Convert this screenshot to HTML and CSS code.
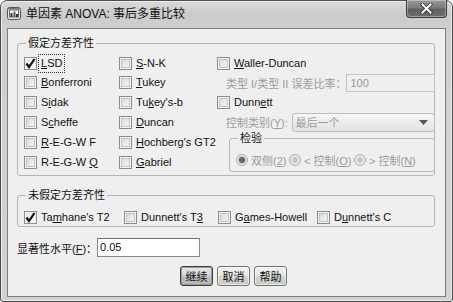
FILE: index.html
```html
<!DOCTYPE html>
<html>
<head>
<meta charset="utf-8">
<title>单因素 ANOVA: 事后多重比较</title>
<link rel="stylesheet" href="styles.css">
</head>
<body>
<div class="window">
  <div class="titlebar">
    <svg class="appicon" width="15" height="15" viewBox="0 0 15 15">
      <rect x="0.5" y="1.5" width="13" height="12" rx="2" fill="#e6e6e6" stroke="#555"/>
      <rect x="2.5" y="4" width="9" height="7" fill="#fff" stroke="#666"/>
      <rect x="3.5" y="7" width="2" height="4" fill="#333"/>
      <rect x="6.5" y="5.5" width="2" height="5.5" fill="#555"/>
      <rect x="9" y="8" width="2" height="3" fill="#333"/>
      <rect x="1" y="2" width="12" height="1.5" fill="#777"/>
    </svg>
    <span class="title">单因素 ANOVA: 事后多重比较</span>
    <div class="close">
      <svg width="13" height="11" viewBox="0 0 13 11">
        <path d="M2.5 1.5 L10.5 9.5 M10.5 1.5 L2.5 9.5" stroke="#2e2e2e" stroke-width="3.6" stroke-linecap="square"/>
        <path d="M2.5 1.5 L10.5 9.5 M10.5 1.5 L2.5 9.5" stroke="#fff" stroke-width="2" stroke-linecap="square"/>
      </svg>
    </div>
  </div>
  <div class="client">
    <fieldset class="group g1">
      <legend>假定方差齐性</legend>
      <div class="grid1">
        <label class="cb"><span class="box checked"><svg width="11" height="11" viewBox="0 0 11 11"><path d="M1.5 5.5 L4 9 L9.5 1" fill="none" stroke="#111" stroke-width="2.2"/></svg></span><span class="lbl focus"><u>L</u>SD</span></label>
        <label class="cb"><span class="box"></span><span class="lbl"><u>S</u>-N-K</span></label>
        <label class="cb"><span class="box"></span><span class="lbl"><u>W</u>aller-Duncan</span></label>

        <label class="cb"><span class="box"></span><span class="lbl"><u>B</u>onferroni</span></label>
        <label class="cb"><span class="box"></span><span class="lbl"><u>T</u>ukey</span></label>
        <div class="sub"><span class="dis">类型 I/类型 II 误差比率：</span><span class="tbox">100</span></div>

        <label class="cb"><span class="box"></span><span class="lbl">S<u>i</u>dak</span></label>
        <label class="cb"><span class="box"></span><span class="lbl">Tu<u>k</u>ey's-b</span></label>
        <label class="cb"><span class="box"></span><span class="lbl">Dunn<u>e</u>tt</span></label>

        <label class="cb"><span class="box"></span><span class="lbl">S<u>c</u>heffe</span></label>
        <label class="cb"><span class="box"></span><span class="lbl"><u>D</u>uncan</span></label>
        <div class="sub"><span class="dis">控制类别(<u>Y</u>):</span><span class="combo"><span>最后一个</span><svg width="9" height="5" viewBox="0 0 9 5"><path d="M0 0 H9 L4.5 5 Z" fill="#555"/></svg></span></div>

        <label class="cb"><span class="box"></span><span class="lbl"><u>R</u>-E-G-W F</span></label>
        <label class="cb"><span class="box"></span><span class="lbl"><u>H</u>ochberg's GT2</span></label>
        <fieldset class="group test">
          <legend>检验</legend>
          <div class="radios">
            <span class="rb"><span class="radio on"></span><span class="dis">双侧(<u>2</u>)</span></span>
            <span class="rb"><span class="radio"></span><span class="dis">&lt; 控制(<u>O</u>)</span></span>
            <span class="rb"><span class="radio"></span><span class="dis">&gt; 控制(<u>N</u>)</span></span>
          </div>
        </fieldset>

        <label class="cb"><span class="box"></span><span class="lbl">R-E-G-W <u>Q</u></span></label>
        <label class="cb"><span class="box"></span><span class="lbl"><u>G</u>abriel</span></label>
      </div>
    </fieldset>

    <fieldset class="group g2">
      <legend>未假定方差齐性</legend>
      <div class="row2">
        <label class="cb w1"><span class="box checked"><svg width="11" height="11" viewBox="0 0 11 11"><path d="M1.5 5.5 L4 9 L9.5 1" fill="none" stroke="#111" stroke-width="2.2"/></svg></span><span class="lbl">Ta<u>m</u>hane's T2</span></label>
        <label class="cb w2"><span class="box"></span><span class="lbl">Dunnett's T<u>3</u></span></label>
        <label class="cb w3"><span class="box"></span><span class="lbl">G<u>a</u>mes-Howell</span></label>
        <label class="cb"><span class="box"></span><span class="lbl">D<u>u</u>nnett's C</span></label>
      </div>
    </fieldset>

    <div class="sigrow">
      <span class="siglabel">显著性水平(<u>F</u>)：</span>
      <span class="input">0.05</span>
    </div>

    <div class="buttons">
      <button class="btn default">继续</button>
      <button class="btn">取消</button>
      <button class="btn">帮助</button>
    </div>
  </div>
</div>
</body>
</html>
```
FILE: styles.css
```css
* { box-sizing: border-box; }
html, body { margin: 0; padding: 0; background: #ffffff; }
body {
  font-family: "Liberation Sans", "Noto Sans CJK SC", sans-serif;
  font-size: 11px;
  color: #111;
}
u { text-decoration: underline; text-underline-offset: 1px; }

.window {
  width: 453px;
  height: 302px;
  border: 1px solid #4e4e4e;
  border-radius: 7px 7px 3px 3px;
  background: linear-gradient(180deg, #d9d9d9 0px, #cbcbcb 14px, #cfcfcf 28px, #d2d2d2 100%);
  box-shadow: inset 0 0 0 1px rgba(255,255,255,0.55);
  padding: 0 6px 4px 6px;
  display: flex;
  flex-direction: column;
}

.titlebar {
  height: 27px;
  display: flex;
  align-items: flex-start;
}
.appicon { margin-top: 5px; flex: none; }
.title {
  margin-left: 4px;
  margin-top: 5px;
  font-size: 12px;
  line-height: 16px;
  color: #111;
  font-family: "Liberation Sans", "Noto Sans CJK SC", sans-serif;
}
.close {
  margin-left: auto;
  margin-right: -1px;
  margin-top: -1px;
  width: 41px;
  height: 18px;
  border: 1px solid #3a3a3a;
  border-top: none;
  border-radius: 0 0 4px 4px;
  background: linear-gradient(180deg, #9a9a9a 0%, #7c7c7c 45%, #606060 55%, #6e6e6e 100%);
  box-shadow: inset 0 0 0 1px rgba(255,255,255,0.35);
  display: flex;
  align-items: center;
  justify-content: center;
}

.client {
  flex: 1;
  border: 1px solid #7c7c7c;
  background: #efefef;
  padding: 7px 10px 0 9px;
  display: flex;
  flex-direction: column;
}

.group {
  margin: 0;
  border: 1px solid #b5b5b5;
  border-radius: 3px;
  min-width: 0;
}
.group > legend {
  padding: 0 2px;
  margin-left: 2px;
  line-height: 14px;
  font-size: 11px;
  color: #111;
}

.g1 { padding: 3px 0 3px 6px; }
.grid1 {
  display: grid;
  grid-template-columns: 95px 98px 1fr;
  grid-template-rows: 20px 19px 20px 20px 20px 20px;
}

.cb {
  display: flex;
  align-items: center;
  gap: 3px;
  white-space: nowrap;
}
.lbl { line-height: 15px; padding: 0 1px; }
.lbl.focus { outline: 1px dotted #333; outline-offset: 1px; }

.box {
  width: 13px;
  height: 13px;
  flex: none;
  border: 1px solid #8c8c8c;
  background: linear-gradient(135deg, #d2d2d2 0%, #ececec 60%, #f6f6f6 100%);
  box-shadow: inset 0 0 0 1px #f4f4f4, inset 0 0 0 2px #c4c4c4;
  display: flex;
  align-items: center;
  justify-content: center;
}
.box.checked {
  background: linear-gradient(135deg, #e6e6e6 0%, #f8f8f8 100%);
  box-shadow: inset 0 0 0 1px #f4f4f4;
}

.dis { color: #9b9b9b; white-space: nowrap; }

.sub {
  display: flex;
  align-items: center;
  padding-left: 9px;
  padding-right: 4px;
}
.tbox {
  margin-left: auto;
  width: 89px;
  height: 18px;
  border: 1px solid #c3c3c3;
  background: #efefef;
  color: #9b9b9b;
  padding-left: 3px;
  line-height: 16px;
}
.combo {
  margin-left: auto;
  width: 143px;
  height: 19px;
  border: 1px solid #bdbdbd;
  border-radius: 3px;
  background: linear-gradient(180deg, #f6f6f6 0%, #ececec 50%, #e2e2e2 100%);
  color: #9b9b9b;
  display: flex;
  align-items: center;
  justify-content: space-between;
  padding: 0 6px 0 2px;
}

.test {
  grid-column: 3;
  grid-row: 5 / span 2;
  margin: -1px 4px 0 12px;
  padding: 7px 0 2px 6px;
  border-color: #b9b9b9;
}
.radios {
  display: flex;
  height: 16px;
  align-items: center;
}
.rb {
  display: flex;
  align-items: center;
  gap: 3px;
}
.rb:nth-child(1) { width: 53px; }
.rb:nth-child(2) { width: 65px; }
.radio {
  width: 12px;
  height: 12px;
  border-radius: 50%;
  border: 1px solid #a9a9a9;
  background: radial-gradient(circle, #c6c6c6 0 2.5px, #e4e4e4 3px, #f2f2f2 100%);
  flex: none;
}
.radio.on {
  background: radial-gradient(circle, #6a6a6a 0 2.5px, #9c9c9c 3.2px, #e8e8e8 4px, #f2f2f2 100%);
}

.g2 {
  margin-top: 12px;
  padding: 7px 0 1px 6px;
}
.row2 { display: flex; height: 16px; align-items: center; }
.w1 { width: 100px; }
.w2 { width: 94px; }
.w3 { width: 99px; }

.sigrow {
  margin-top: 11px;
  display: flex;
  align-items: center;
  height: 19px;
}
.siglabel { width: 80px; white-space: nowrap; }
.input {
  width: 103px;
  height: 19px;
  border: 1px solid #8a8a8a;
  border-top-color: #6e6e6e;
  background: #ffffff;
  padding-left: 2px;
  line-height: 17px;
}

.buttons {
  margin-top: 9px;
  display: flex;
  gap: 4px;
  padding-left: 163px;
}
.btn {
  width: 33px;
  height: 20px;
  margin: 0;
  padding: 0;
  font-family: "Noto Sans CJK SC", sans-serif;
  font-size: 11px;
  color: #111;
  border: 1px solid #727272;
  border-radius: 3px;
  background: linear-gradient(180deg, #f2f2f2 0%, #e6e6e6 45%, #d3d3d3 55%, #c9c9c9 100%);
  box-shadow: inset 0 0 0 1px rgba(255,255,255,0.6);
}
.btn.default {
  border-color: #3c3c3c;
  box-shadow: inset 0 0 0 1px #9a9a9a;
  background: linear-gradient(180deg, #e6e6e6 0%, #d6d6d6 45%, #bdbdbd 55%, #b4b4b4 100%);
}
```
